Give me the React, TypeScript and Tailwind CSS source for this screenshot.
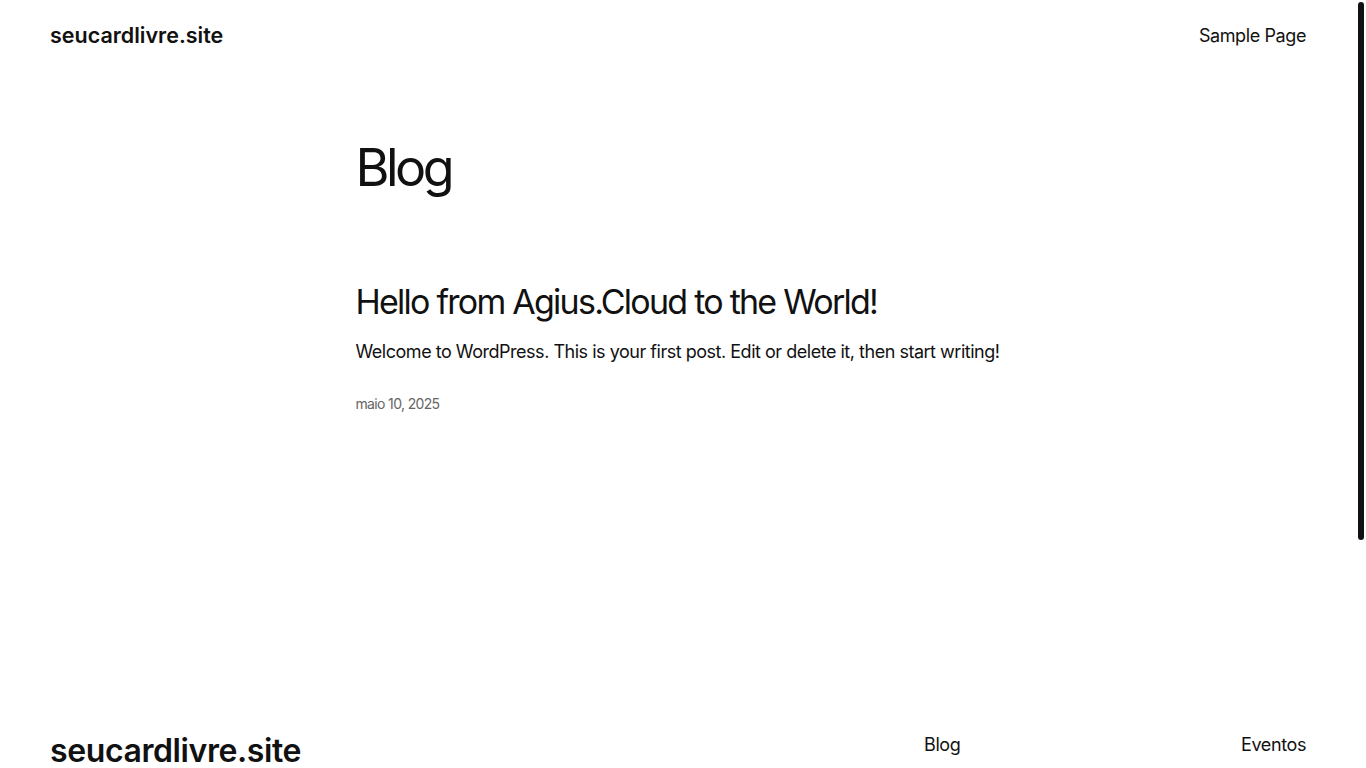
import React from 'react';

const font = { fontFamily: 'Inter, "Noto Sans", sans-serif' };

export default function App() {
  return (
    <div className="flex h-screen w-full overflow-hidden bg-white text-[#111111]" style={font}>
      <div className="flex flex-1 flex-col">
        <header className="flex h-[70px] items-center justify-between pl-[50px] pr-[50px]">
          <a className="text-[21.5px] font-semibold tracking-[0px]">seucardlivre.site</a>
          <nav>
            <a className="text-[18px] font-normal tracking-[-0.4px]">Sample Page</a>
          </nav>
        </header>

        <main className="mx-auto w-[645px]">
          <h1 className="mt-[66px] text-[52px] font-normal leading-[64px] tracking-[-3.5px]">Blog</h1>

          <article className="mt-[80px]">
            <h2 className="text-[34px] font-normal leading-[44px] tracking-[-1.75px]">
              Hello from Agius.Cloud to the World!
            </h2>
            <p className="mt-[12px] text-[18px] leading-[32px] tracking-[-0.48px]">
              Welcome to WordPress. This is your first post. Edit or delete it, then start writing!
            </p>
            <div className="mt-[26px] text-[14px] leading-[20px] tracking-[-0.65px] text-[#666666]">maio 10, 2025</div>
          </article>
        </main>

        <footer className="mt-auto flex items-start justify-between pl-[50px] pr-[50px]">
          <a className="-mb-[5px] text-[32px] font-semibold leading-[44px] tracking-[-0.4px]">seucardlivre.site</a>
          <nav className="flex w-[382px] justify-between pt-[2px]">
            <a className="text-[18px] tracking-[-0.4px]">Blog</a>
            <a className="text-[18px] tracking-[-0.4px]">Eventos</a>
          </nav>
        </footer>
      </div>

      <div className="relative w-[10px] shrink-0">
        <div className="absolute left-[2px] top-[2px] h-[538px] w-[6px] rounded-full bg-[#111111]" />
      </div>
    </div>
  );
}
